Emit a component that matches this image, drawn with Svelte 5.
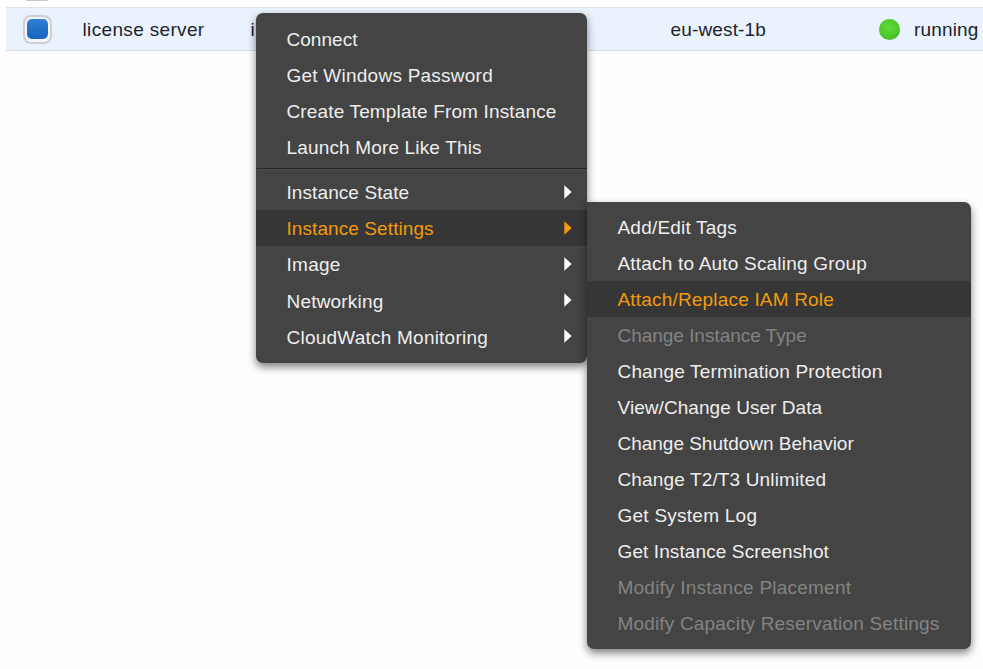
<script>
  const actions = [
    { label: 'Connect', width: 71 },
    { label: 'Get Windows Password', width: 206.5 },
    { label: 'Create Template From Instance', width: 270 },
    { label: 'Launch More Like This', width: 195.2 }
  ];

  const groups = [
    { label: 'Instance State', width: 122.7 },
    { label: 'Instance Settings', width: 147.2, active: true },
    { label: 'Image', width: 54.2 },
    { label: 'Networking', width: 97, low: true },
    { label: 'CloudWatch Monitoring', width: 201.5, low: true }
  ];

  const settings = [
    { label: 'Add/Edit Tags', width: 119.5 },
    { label: 'Attach to Auto Scaling Group', width: 249.5 },
    { label: 'Attach/Replace IAM Role', width: 216.5, active: true },
    { label: 'Change Instance Type', width: 189.2, disabled: true },
    { label: 'Change Termination Protection', width: 265 },
    { label: 'View/Change User Data', width: 204.7 },
    { label: 'Change Shutdown Behavior', width: 236.2 },
    { label: 'Change T2/T3 Unlimited', width: 208.7 },
    { label: 'Get System Log', width: 139.7 },
    { label: 'Get Instance Screenshot', width: 211.5 },
    { label: 'Modify Instance Placement', width: 233.7, disabled: true },
    { label: 'Modify Capacity Reservation Settings', width: 322, disabled: true }
  ];

  // Tracks a label out so that it fills the given width.
  function fit(node, width) {
    const natural = node.getBoundingClientRect().width;
    node.style.letterSpacing = `${(width - natural) / node.textContent.length}px`;
  }
</script>

<main class="screen">
  <div class="previous-row"><span class="previous-box"></span></div>
  <div class="row">
    <span class="checkbox"><span class="mark"></span></span>
    <span class="cell name"><span use:fit={122}>license server</span></span>
    <span class="cell id">i</span>
    <span class="cell zone"><span use:fit={95.5}>eu-west-1b</span></span>
    <span class="dot"></span>
    <span class="cell state"><span use:fit={64.5}>running</span></span>
  </div>

  <nav class="menu context">
    {#each actions as item}
      <div class="item"><span class="label" use:fit={item.width}>{item.label}</span></div>
    {/each}
    <div class="divider"></div>
    {#each groups as item}
      <div class="item" class:active={item.active}>
        <span class="label" class:low={item.low} use:fit={item.width}>{item.label}</span>
        <svg class="arrow" width="8" height="14" viewBox="0 0 8 14"><path d="M0.3 0.3L7.6 7L0.3 13.7Z" fill="currentColor" /></svg>
      </div>
    {/each}
  </nav>

  <nav class="menu sub">
    {#each settings as item}
      <div class="item" class:active={item.active} class:disabled={item.disabled}>
        <span class="label" use:fit={item.width}>{item.label}</span>
      </div>
    {/each}
  </nav>
</main>

<style>
  :global(body) {
    background: #fefefe;
  }
  .screen {
    position: relative;
    width: 983px;
    height: 669px;
    overflow: hidden;
    font-family: 'Liberation Sans', Arial, sans-serif;
    font-size: 19px;
    white-space: nowrap;
  }
  .previous-row {
    height: 7px;
    padding-left: 26px;
  }
  .previous-box {
    display: block;
    box-sizing: border-box;
    width: 22px;
    height: 1px;
    border-radius: 0 0 6px 6px;
    background: #c9c9cb;
  }
  .row {
    display: flex;
    align-items: center;
    box-sizing: border-box;
    height: 44px;
    margin-left: 6px;
    padding-left: 17px;
    border-top: 1px solid #dde1e8;
    border-bottom: 1px solid #d9dde6;
    background: #eaf2fe;
    color: #20242b;
  }
  .checkbox {
    display: flex;
    align-items: center;
    justify-content: center;
    box-sizing: border-box;
    flex: none;
    width: 29px;
    height: 29px;
    border: 2px solid #cfcfcf;
    border-radius: 8px;
    background: #f3f5f8;
  }
  .mark {
    width: 21px;
    height: 20px;
    border-radius: 5px;
    background: linear-gradient(#2f80d6, #1763bd);
  }
  .cell {
    flex: none;
    padding-top: 1px;
    line-height: 22px;
  }
  .name {
    width: 168px;
    margin-left: 30.5px;
  }
  .id {
    width: 420px;
  }
  .zone {
    width: 208.5px;
  }
  .dot {
    flex: none;
    width: 21px;
    height: 21px;
    border-radius: 50%;
    background: radial-gradient(circle at 45% 40%, #62d83d 0, #4fcb2b 50%, #39aa1b 100%);
  }
  .state {
    margin-left: 14px;
  }
  .menu {
    position: absolute;
    box-sizing: border-box;
    border-radius: 7px;
    background: #444;
    color: #eee;
    box-shadow: 0 4px 9px rgba(0, 0, 0, 0.5);
  }
  .context {
    left: 256px;
    top: 13px;
    width: 331px;
    height: 349.5px;
    padding-top: 8px;
  }
  .sub {
    left: 587px;
    top: 202px;
    width: 383.5px;
    height: 447px;
    padding-top: 7px;
    border-top-left-radius: 0;
  }
  .item {
    display: flex;
    align-items: center;
    justify-content: space-between;
    height: 36px;
    padding: 0 15.5px 0 30.5px;
  }
  .label {
    padding-top: 2px;
    line-height: 22px;
  }
  .low {
    padding-top: 4px;
  }
  .active {
    background: #363636;
    color: #f29a0c;
  }
  .disabled {
    color: #838383;
  }
  .arrow {
    flex: none;
    color: #fff;
  }
  .active .arrow {
    color: #f79b0b;
  }
  .divider {
    height: 1px;
    margin: 3px 1px 4px;
    border-top: 1px solid #252525;
    background: #4d4d4d;
  }
</style>
